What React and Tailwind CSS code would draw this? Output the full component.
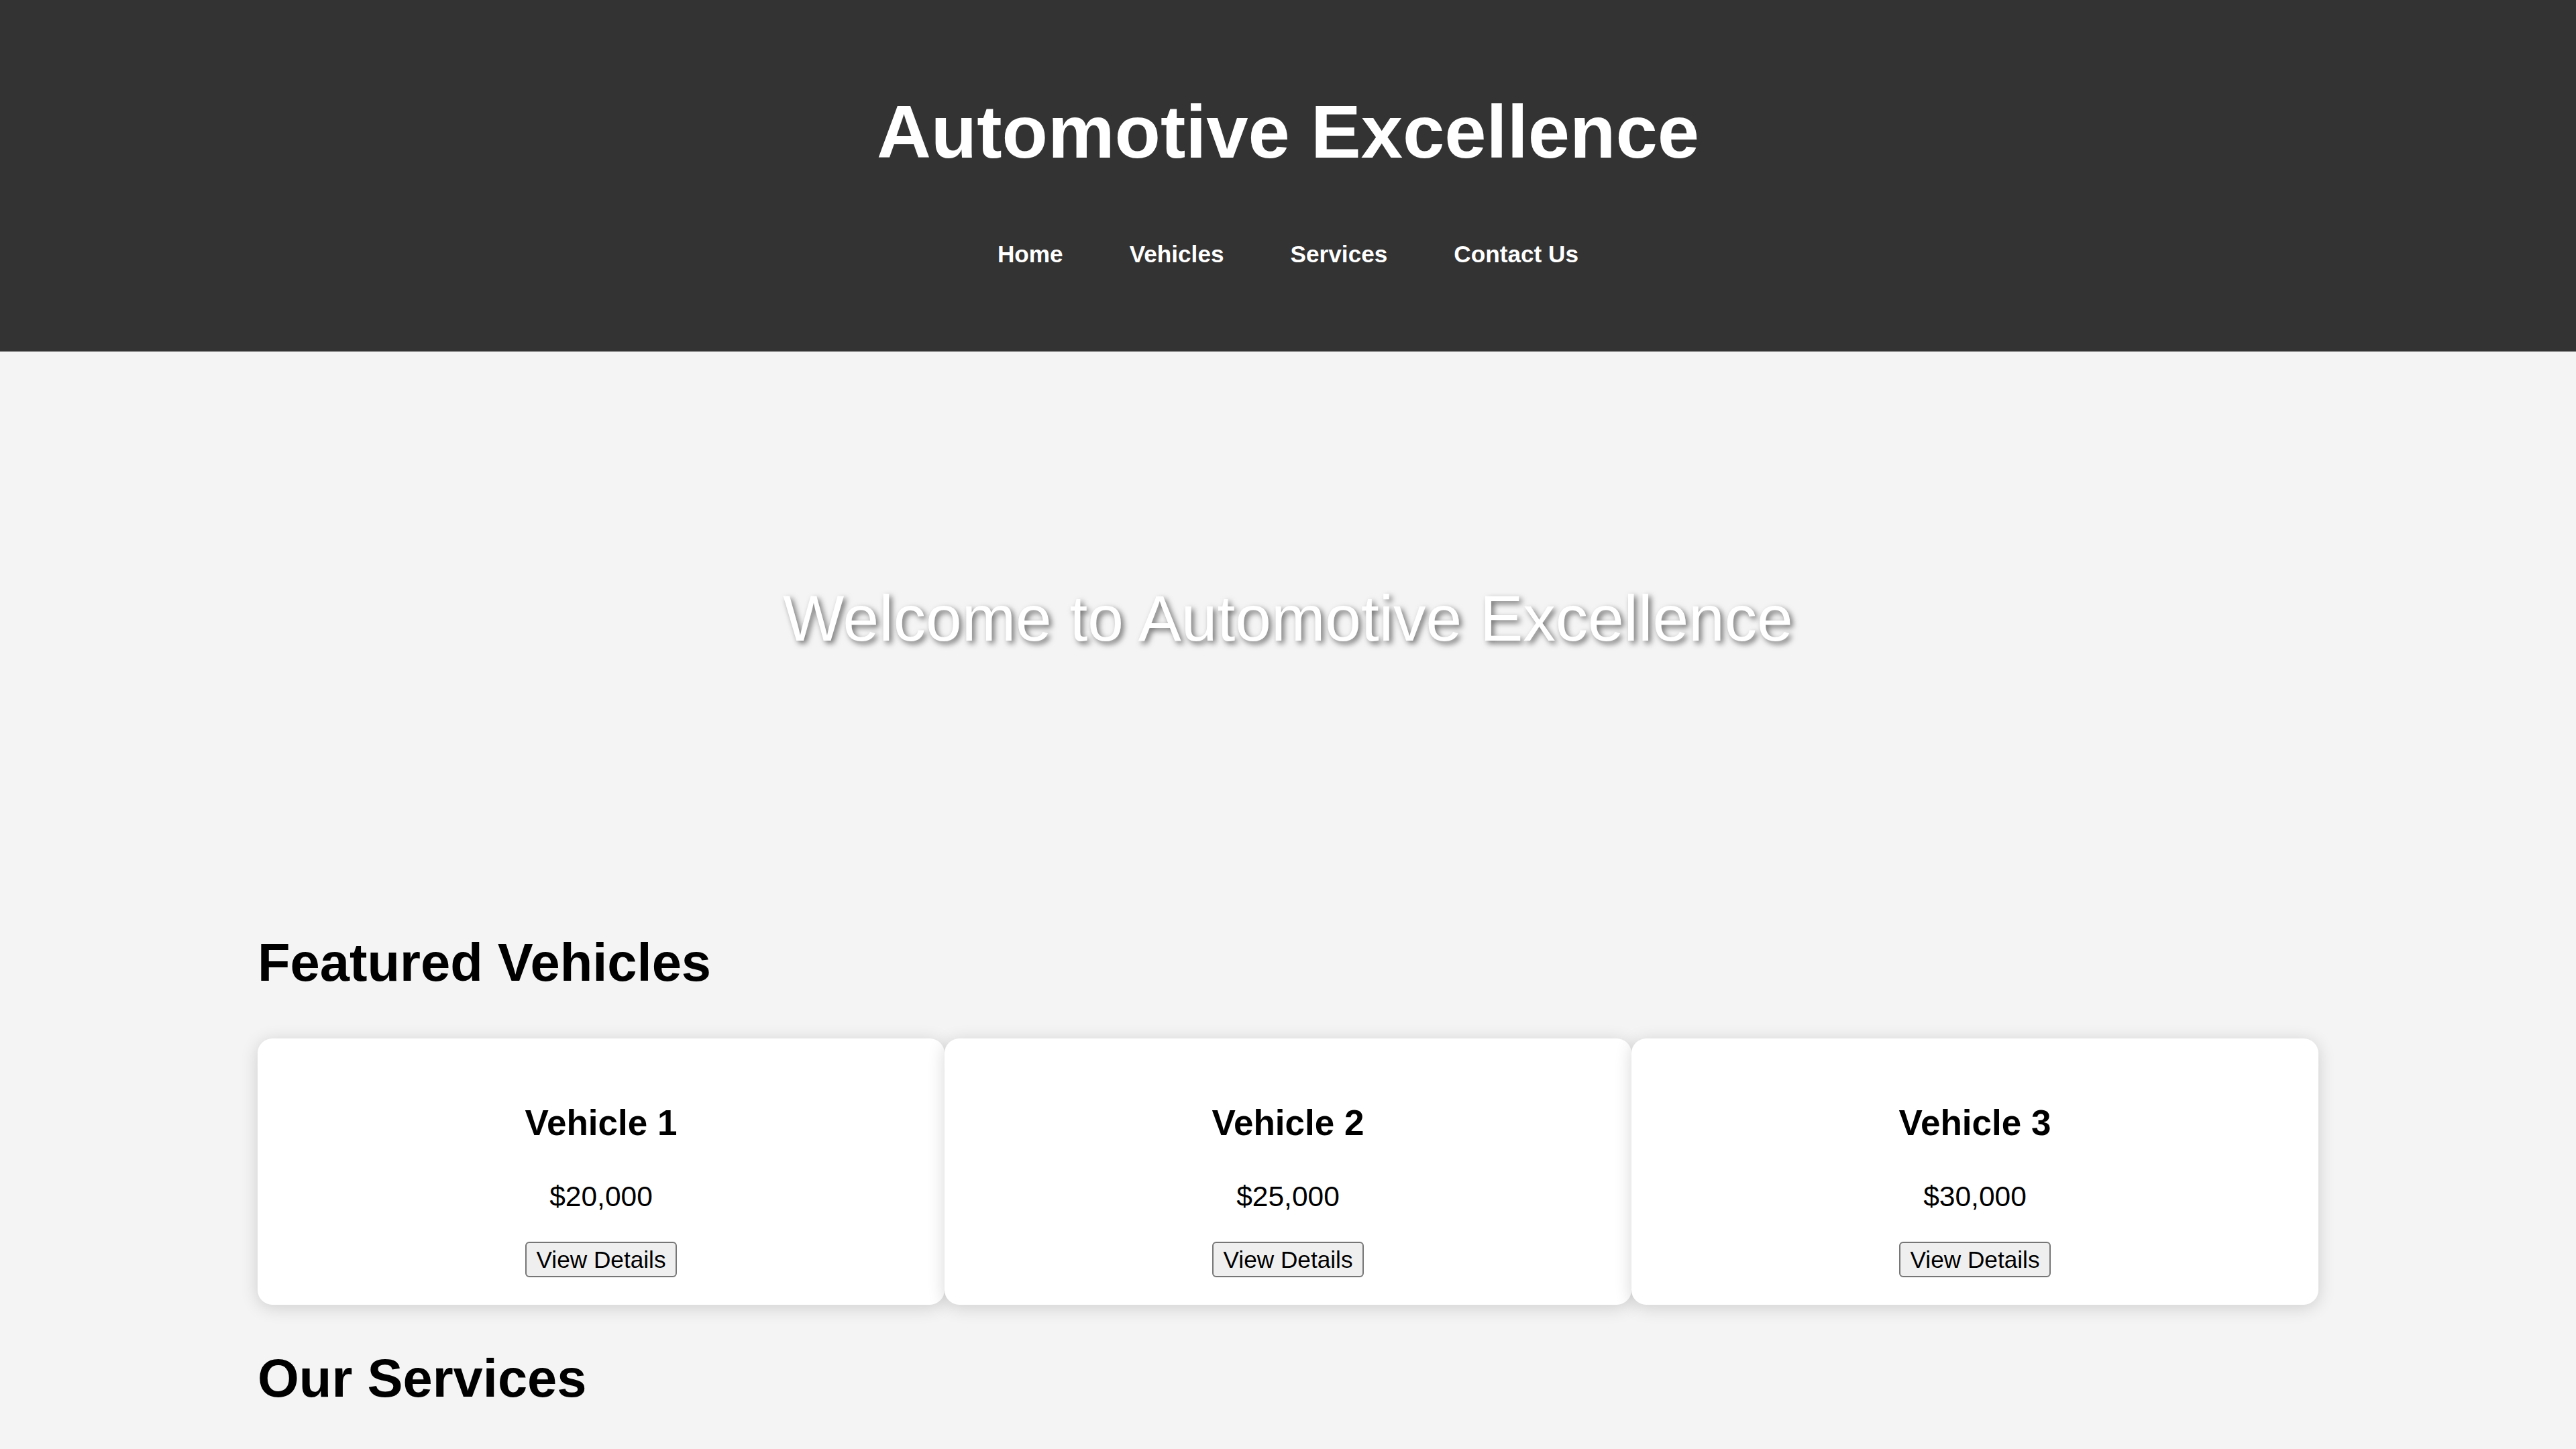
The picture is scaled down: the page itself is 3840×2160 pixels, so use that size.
import React from "react";

const vehicles = [
  { name: "Vehicle 1", price: "$20,000" },
  { name: "Vehicle 2", price: "$25,000" },
  { name: "Vehicle 3", price: "$30,000" },
];

export default function App() {
  return (
    <div className="min-h-screen bg-[#f4f4f4] text-black font-['Liberation_Sans',Arial,sans-serif]">
      <header className="bg-[#333333] text-white h-[524px] pt-[132px] flex flex-col items-center">
        <h1 className="text-[112px] leading-[129px] font-bold">Automotive Excellence</h1>
        <nav className="mt-[98px] flex gap-[99px] text-[35.2px] leading-[40px] font-bold">
          <a href="#" className="text-white">Home</a>
          <a href="#" className="text-white">Vehicles</a>
          <a href="#" className="text-white">Services</a>
          <a href="#" className="text-white">Contact Us</a>
        </nav>
      </header>

      <section className="pt-[343px] pb-[333px] flex justify-center">
        <h2 className="text-[96.5px] leading-[110px] font-normal text-white [text-shadow:4px_4px_8px_rgba(0,0,0,0.55)]">
          Welcome to Automotive Excellence
        </h2>
      </section>

      <main className="w-[80%] mx-auto">
        <section className="mt-[79px]">
          <h2 className="text-[79.5px] leading-[92px] font-bold">Featured Vehicles</h2>
          <div className="mt-[67px] grid grid-cols-3">
            {vehicles.map((v) => (
              <div
                key={v.name}
                className="bg-white rounded-[22px] shadow-[0_4px_26px_rgba(0,0,0,0.16)] pt-[95px] pb-[41px] flex flex-col items-center"
              >
                <h3 className="text-[53px] leading-[61px] font-bold">{v.name}</h3>
                <p className="mt-[56px] text-[42.5px] leading-[48px]">{v.price}</p>
                <button className="mt-[43px] h-[53px] px-[15px] text-[35.2px] leading-[40px] bg-[#efefef] border-2 border-[#767676] rounded-[6px] text-black">
                  View Details
                </button>
              </div>
            ))}
          </div>
        </section>

        <section className="mt-[64px] pb-[80px]">
          <h2 className="text-[79.5px] leading-[92px] font-bold">Our Services</h2>
        </section>
      </main>
    </div>
  );
}
